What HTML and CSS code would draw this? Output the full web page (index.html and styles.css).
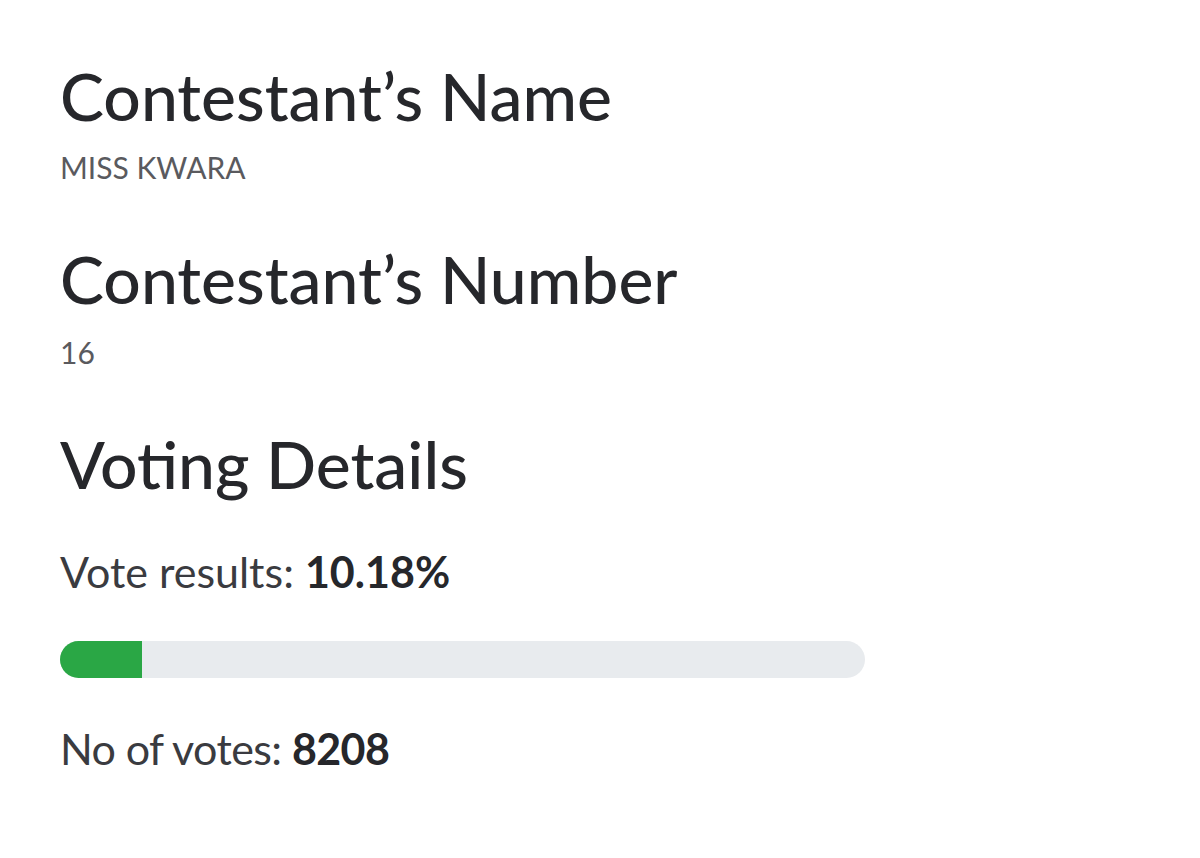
FILE: index.html
```html
<!DOCTYPE html>
<html>
<head>
    <title>Contestant</title>
    <link rel="stylesheet" href="styles.css">
</head>
<body>
    <div class="page">
        <h1 class="title">Contestant’s Name</h1>
        <p class="caption">MISS KWARA</p>

        <h1 class="title second">Contestant’s Number</h1>
        <p class="caption number">16</p>

        <h1 class="title second">Voting Details</h1>
        <p class="line">Vote results: <b>10.18%</b></p>

        <div class="bar">
            <div class="fill" style="width: 10.18%"></div>
        </div>

        <p class="line votes">No of votes: <b>8208</b></p>
    </div>
</body>
</html>
```

FILE: styles.css
```css
body {
    margin: 0;
    background-color: white;
    font-family: Lato, "Noto Sans", sans-serif;
}
.page {
    padding: 56px 60px 0 60px;
}
.title {
    margin: 0;
    font-size: 66px;
    line-height: 79px;
    font-weight: 500;
    color: #26272b;
}
.title.second {
    margin-top: 54px;
}
.caption {
    margin: 14px 0 0 0;
    font-size: 30px;
    line-height: 36px;
    color: #5a5a5e;
}
.caption.number {
    margin-top: 16px;
}
.line {
    margin: 43px 0 0 0;
    font-size: 43px;
    line-height: 52px;
    color: #3a3b40;
}
.line b {
    color: #26272b;
}
.bar {
    margin-top: 43px;
    width: 805px;
    height: 37px;
    border-radius: 19px;
    background-color: #e8ebee;
    overflow: hidden;
}
.fill {
    height: 100%;
    background-color: #2aa745;
}
.votes {
    margin-top: 45px;
    letter-spacing: -0.6px;
}
```
